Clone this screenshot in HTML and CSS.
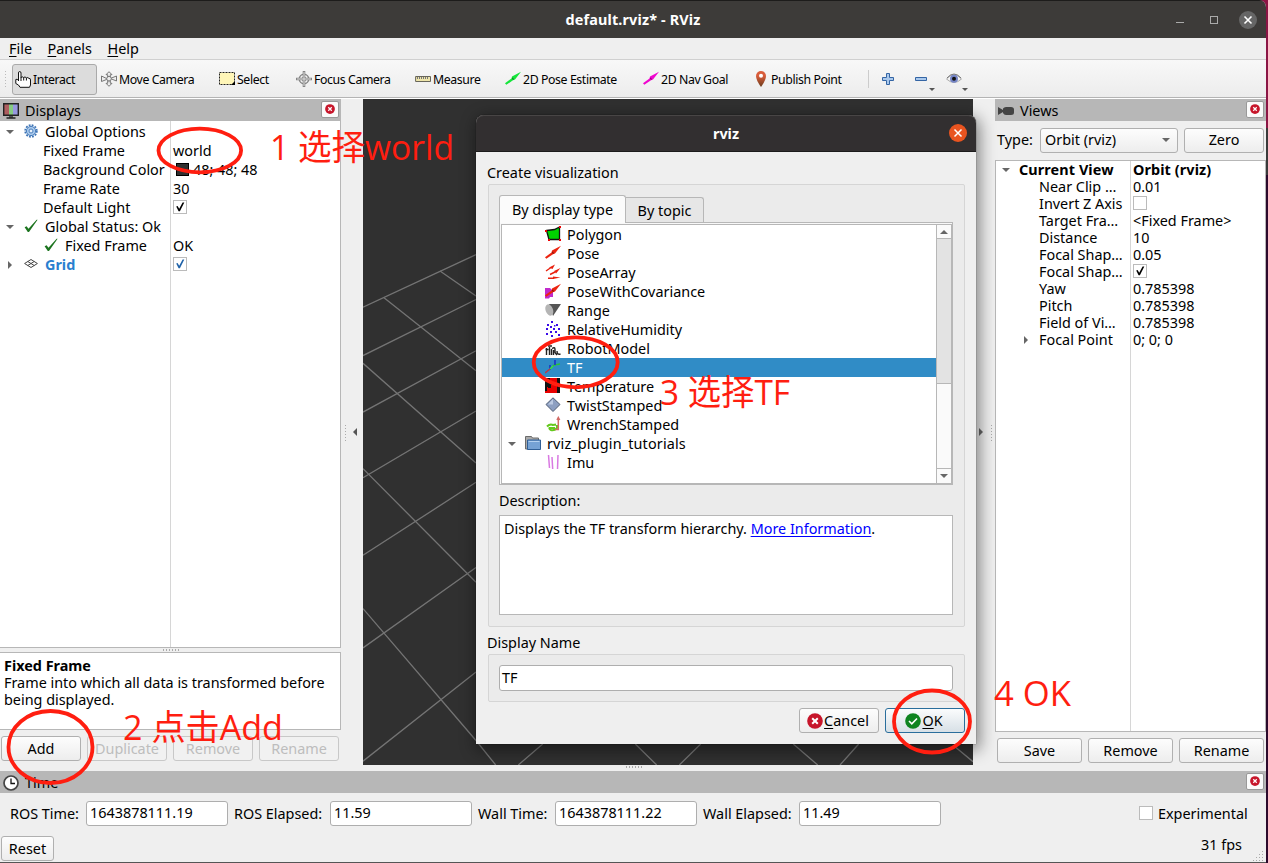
FILE: index.html
```html
<!DOCTYPE html>
<html lang="en">
<head>
    <meta charset="UTF-8">
    <meta name="viewport" content="width=device-width, initial-scale=1.0">
    <title>default.rviz* - RViz</title>
    <link rel="stylesheet" href="styles.css">
</head>
<body>
    <!-- shared icons -->
    <svg class="defs" width="0" height="0">
        <symbol id="close" viewBox="0 0 16 16">
            <circle cx="8" cy="8" r="7.8" fill="#c7162b"/>
            <path d="M5.2 5.2l5.6 5.6M10.8 5.2l-5.6 5.6" stroke="#fff" stroke-width="2"/>
        </symbol>
        <symbol id="check" viewBox="0 0 14 14">
            <path d="M3.2 6.5l1.4-.4 1.6 2.6L9.6 2.6h1.7L6.9 11.2H5.6z" fill="currentColor"/>
        </symbol>
        <symbol id="tick" viewBox="0 0 14 14">
            <path d="M.6 8.2l2-.9 1.9 2.4L12.6.8h1L5 13H3.8z" fill="#1c741f"/>
        </symbol>
        <symbol id="arrow" viewBox="0 0 16 16">
            <path d="M0 12.2L6.500 7.500 7 5.500 16 .8 10 8.500 8 9.300 1.300 13.800z" fill="currentColor"/>
            <path d="M7.300 6.800l1.200 1.800" stroke="#0006" stroke-width="1.200"/>
        </symbol>
    </svg>

    <div class="window">
        <div class="titlebar">
            <span class="title">default.rviz* - RViz</span>
            <div class="window-controls">
                <span class="minimize"></span>
                <span class="maximize"></span>
                <span class="close-btn"><svg width="18" height="18"><path d="M5.500 5.500l7 7M12.500 5.500l-7 7" stroke="#fff" stroke-width="1.600"/></svg></span>
            </div>
        </div>

        <div class="menubar">
            <span><u>F</u>ile</span>
            <span><u>P</u>anels</span>
            <span><u>H</u>elp</span>
        </div>

        <div class="toolbar">
            <span class="grip"></span>
            <div class="tools">
                <div class="tool active">
                    <svg width="17" height="17"><path d="M3.500 10V2q0-1.500 1.200-1.500T6 2v4.500Q7 5 8.500 6.500 10 5.300 11.500 6.800 13 6 14 7.500q1.500-.5 1.500 1.500v5l-1 2.300H5L3.500 14 .8 12.500V8.500q1.200-1 2.700 1z" fill="#fff" stroke="#111"/><path d="M6 6v4M8.700 6.500v3M11.400 7v2.500" stroke="#111"/></svg>
                    <span>Interact</span>
                </div>
                <div class="tool">
                    <svg width="16" height="16" fill="#eee" stroke="#777"><path d="M8 .7l3 3H9.300v2.500h-2.600V3.700H5zM8 15.300l3-3H9.300V9.800h-2.600v2.500H5z"/><path d="M.5 5l5 2.500 5-.5 5-2v5l-5-2-5 .5-5 2z"/><circle cx="8" cy="7.700" r="2.300"/></svg>
                    <span>Move Camera</span>
                </div>
                <div class="tool">
                    <svg width="16" height="16"><path d="M.5 1.500h15v12H.5z" fill="#fff6b8" stroke="#222" stroke-dasharray="2 1"/><path d="M16 10v4h-4z"/></svg>
                    <span>Select</span>
                </div>
                <div class="tool">
                    <svg width="16" height="16" fill="none" stroke="#858585"><circle cx="8" cy="8" r="4.700" stroke-width="1.500"/><circle cx="8" cy="8" r="2"/><path d="M8 0v16M0 8h16" stroke-width="2.600"/><path d="M8 1v14M1 8h14" stroke="#e5e5e5" stroke-width=".9"/></svg>
                    <span>Focus Camera</span>
                </div>
                <div class="tool">
                    <svg width="16" height="16"><path d="M.6 5.500h14.900v5H.6z" fill="#eee5aa" stroke="#68665a"/><path d="M2.500 6v2M4.500 6v2M6.500 6v2M8.500 6v2M10.500 6v2M12.500 6v2" stroke="#777"/></svg>
                    <span>Measure</span>
                </div>
                <div class="tool">
                    <svg class="green" width="16" height="16"><use href="#arrow"/></svg>
                    <span>2D Pose Estimate</span>
                </div>
                <div class="tool">
                    <svg class="magenta" width="16" height="16"><use href="#arrow"/></svg>
                    <span>2D Nav Goal</span>
                </div>
                <div class="tool">
                    <svg width="16" height="16"><linearGradient id="pin" x2="0" y2="1"><stop offset=".3" stop-color="#d95d3b"/><stop offset="1" stop-color="#693c1c"/></linearGradient><path d="M8 16Q3 9 3 5a5 5 0 0 1 10 0Q13 9 8 16z" fill="url(#pin)"/><circle cx="8" cy="4.800" r="2" fill="#fff"/></svg>
                    <span>Publish Point</span>
                </div>
            </div>
            <div class="view-tools">
                <svg width="12" height="12"><path d="M4.500.5h3v4h4v3h-4v4h-3v-4h-4v-3h4z" fill="#a9c8ec" stroke="#3465a4"/></svg>
                <svg width="12" height="12"><path d="M.5 4.500h11v3H.5z" fill="#a9c8ec" stroke="#3465a4"/></svg>
                <span class="caret"></span>
                <svg width="16" height="16"><path d="M.5 8Q8-1 15.500 8 8 15 .5 8z" fill="#f4f4f4" stroke="#aaa"/><path d="M1 7Q8-1 15 7" fill="none" stroke="#777"/><circle cx="8" cy="7.800" r="4" fill="#7585c7"/><circle cx="8" cy="7.800" r="2" fill="#111"/></svg>
                <span class="caret"></span>
            </div>
        </div>

        <div class="workspace">
            <div class="displays">
                <div class="dock-title">
                    <svg width="16" height="16"><linearGradient id="tv"><stop offset=".33" stop-color="#ae5e60"/><stop offset=".33" stop-color="#86cc83"/><stop offset=".67" stop-color="#86cc83"/><stop offset=".67" stop-color="#9798df"/></linearGradient><path d="M.7 .7h14.600v11.500H.7z" fill="url(#tv)" stroke="#222" stroke-width="1.400"/><path d="M6 13h4v2H6z" fill="#555"/><path d="M3.500 15h9" stroke="#222" stroke-width="1.500"/></svg>
                    <span>Displays</span>
                    <span class="dock-close"><svg width="10" height="10"><use href="#close"/></svg></span>
                </div>
                <div class="tree">
                    <div class="row"><div class="key"><i class="open"></i><svg width="14" height="14"><circle cx="7" cy="7" r="5.800" fill="none" stroke="#3d73b5" stroke-width="1.800" stroke-dasharray="1.800 1.240"/><circle cx="7" cy="7" r="4.600" fill="#a9c9ec" stroke="#4b80be"/><circle cx="7" cy="7" r="2" fill="#eaf2fb" stroke="#4b80be"/></svg><span>Global Options</span></div><div class="value"></div></div>
                    <div class="row child"><div class="key">Fixed Frame</div><div class="value">world</div></div>
                    <div class="row child"><div class="key">Background Color</div><div class="value"><b class="swatch"></b>48; 48; 48</div></div>
                    <div class="row child"><div class="key">Frame Rate</div><div class="value">30</div></div>
                    <div class="row child"><div class="key">Default Light</div><div class="value"><span class="box"><svg width="14" height="14"><use href="#check"/></svg></span></div></div>
                    <div class="row"><div class="key"><i class="open"></i><svg width="14" height="14"><use href="#tick"/></svg><span>Global Status: Ok</span></div><div class="value"></div></div>
                    <div class="row nested"><div class="key"><svg width="14" height="14"><use href="#tick"/></svg><span>Fixed Frame</span></div><div class="value">OK</div></div>
                    <div class="row grid-row"><div class="key"><i class="closed"></i><svg width="14" height="14" fill="none" stroke="#444"><path d="M.6 6.500L7 2.500l6.400 4L7 10.500zM3.800 4.500l6.400 4M10.200 4.500l-6.400 4"/></svg><span>Grid</span></div><div class="value"><span class="box"><svg width="14" height="14"><use href="#check"/></svg></span></div></div>
                </div>
                <div class="splitter-h"></div>
                <div class="help">
                    <b>Fixed Frame</b><br>
                    Frame into which all data is transformed before<br>being displayed.
                </div>
                <div class="buttons">
                    <button>Add</button>
                    <button disabled>Duplicate</button>
                    <button disabled>Remove</button>
                    <button disabled>Rename</button>
                </div>
            </div>

            <div class="splitter-v"><span class="dots"></span><i class="left"></i></div>

            <svg class="viewport" width="610" height="666">
                <g stroke="#747474" stroke-width="1.300" fill="none">
                    <path d="M0 208.200L113 155.600M0 256.600L113 200.500M0 313.100L113 251.700M0 378.700L113 312M0 456.300L113 383.300M0 548.900L113 468.500M0 662.200L113 573.100"/>
                    <path d="M77 172l36 25M21 198.700l92 73M0 264.300L113 364M0 369.600L113 483.300M0 509.600L113 641.500l19.700 24.500"/>
                    <path d="M179.700 645l-24.400 21M272.300 645l21.400 21M337.700 645l-21.400 21M430.300 645l24.400 21M495.700 645L477 666M592 647.700l18 15"/>
                </g>
            </svg>

            <div class="splitter-v after"><i class="right"></i><span class="dots"></span></div>

            <div class="views">
                <div class="dock-title">
                    <svg width="16" height="16" fill="#444"><path d="M0 4l5 3V5.500Q6 4 8 4h5q3 0 3 2.500v3Q16 12 13 12H8q-2 0-3-2V9l-5 3z"/></svg>
                    <span>Views</span>
                    <span class="dock-close"><svg width="10" height="10"><use href="#close"/></svg></span>
                </div>
                <div class="type-row">
                    <span>Type:</span>
                    <div class="combo">Orbit (rviz)<i class="open"></i></div>
                    <button>Zero</button>
                </div>
                <div class="tree">
                    <div class="row head"><div class="key"><i class="open"></i><b>Current View</b></div><div class="value"><b>Orbit (rviz)</b></div></div>
                    <div class="row"><div class="key">Near Clip …</div><div class="value">0.01</div></div>
                    <div class="row"><div class="key">Invert Z Axis</div><div class="value"><span class="box"></span></div></div>
                    <div class="row"><div class="key">Target Fra…</div><div class="value">&lt;Fixed Frame&gt;</div></div>
                    <div class="row"><div class="key">Distance</div><div class="value">10</div></div>
                    <div class="row"><div class="key">Focal Shap…</div><div class="value">0.05</div></div>
                    <div class="row"><div class="key">Focal Shap…</div><div class="value"><span class="box"><svg width="14" height="14"><use href="#check"/></svg></span></div></div>
                    <div class="row"><div class="key">Yaw</div><div class="value">0.785398</div></div>
                    <div class="row"><div class="key">Pitch</div><div class="value">0.785398</div></div>
                    <div class="row"><div class="key">Field of Vi…</div><div class="value">0.785398</div></div>
                    <div class="row point"><div class="key"><i class="closed"></i><span>Focal Point</span></div><div class="value">0; 0; 0</div></div>
                </div>
                <div class="buttons">
                    <button>Save</button>
                    <button>Remove</button>
                    <button>Rename</button>
                </div>
            </div>
        </div>

        <div class="time-gap"><span class="dots"></span></div>
        <div class="dock-title time-title">
            <svg width="16" height="16"><circle cx="8" cy="8" r="7" fill="#fff" stroke="#444" stroke-width="1.700"/><path d="M8 3.500V8.500h4" fill="none" stroke="#111" stroke-width="1.300"/></svg>
            <span>Time</span>
            <span class="dock-close"><svg width="10" height="10"><use href="#close"/></svg></span>
        </div>
        <div class="time-row">
            <label>ROS Time:</label><div class="field">1643878111.19</div>
            <label>ROS Elapsed:</label><div class="field">11.59</div>
            <label>Wall Time:</label><div class="field">1643878111.22</div>
            <label>Wall Elapsed:</label><div class="field">11.49</div>
            <div class="experimental"><span class="box"></span><span>Experimental</span></div>
        </div>
        <div class="status">
            <button>Reset</button>
            <span class="fps">31 fps</span>
            <svg class="resize" width="12" height="12"><path d="M10 1.500h2M7 4.500h5M4 7.500h8M1 10.500h11" stroke="#aaa" stroke-dasharray="1 2"/></svg>
        </div>
    </div>

    <div class="dialog">
        <div class="dialog-title">
            <span>rviz</span>
            <span class="dialog-close"><svg width="18" height="18"><path d="M5.500 5.500l7 7M12.500 5.500l-7 7" stroke="#fff" stroke-width="1.500"/></svg></span>
        </div>
        <div class="dialog-body">
            <div class="group-label">Create visualization</div>
            <div class="group create">
                <div class="tabs"><span class="tab selected">By display type</span><span class="tab">By topic</span></div>
                <div class="pane">
                    <div class="list">
                        <div class="items">
                            <div class="item"><svg width="16" height="16"><path d="M1.500 4.500l8-1L14.500 1v12.500h-10.500z" fill="#00d400" stroke="#111" stroke-width="1.300"/><path d="M0 4h2v2H0zM14 0h2v2h-2zM3 13h2v2H3zM14 13h2v2h-2z" fill="#e00"/></svg><span>Polygon</span></div>
                            <div class="item"><svg class="red" width="16" height="16"><use href="#arrow"/></svg><span>Pose</span></div>
                            <div class="item"><svg width="16" height="16" fill="#e9210f" stroke="#e9210f"><path d="M1 7l5-3.500M5 10.500l5-2.500M3 14.200h6" stroke-width="1.400"/><path d="M4 3.500l6-3L7.500 5zM9 7L15.500 4 11 9.500zM8 12.500l7.500 1-7.500 1.500z" stroke="none"/></svg><span>PoseArray</span></div>
                            <div class="item"><svg class="red" width="16" height="16"><path d="M0 5h5l3 3v6H5l-1 1.500H0z" fill="#c12bcc"/><use href="#arrow"/></svg><span>PoseWithCovariance</span></div>
                            <div class="item"><svg width="16" height="16"><path d="M4 2h12L8 14z" fill="#555"/><ellipse cx="4.300" cy="8" rx="3.700" ry="5.900" transform="rotate(-20 4.300 8)" fill="#b5b5b5"/></svg><span>Range</span></div>
                            <div class="item"><svg width="16" height="16" fill="#3a0be8"><path d="M6 0h2v2H6zM2 3h2v2H2zM5 5h2v2H5zM11 3h2v2h-2zM1 7h2v2H1zM8 7h2v2H8zM13 7h2v2h-2zM5 10h2v2H5zM10 10h2v2h-2zM1 12h2v2H1zM6 14h2v2H6zM13 13h2v2h-2zM9 4h1.500v1.500H9z"/></svg><span>RelativeHumidity</span></div>
                            <div class="item"><svg width="16" height="16" fill="none" stroke="#222"><path d="M1.500 8v7M.5 9.500h3M4.500 7v8M3 6h4M6.500 9v6M7 8.500q3-2 3 1v3l2 2.500M8.500 10v5M12 11q0 4 3.500 3" stroke-width="1.400"/></svg><span>RobotModel</span></div>
                            <div class="item current"><svg width="16" height="16" fill="none"><path d="M6 9L9 6l6-1" stroke="#28c434" stroke-width="1.300"/><path d="M5 11V6M10 6V1" stroke="#1d30c9" stroke-width="1.600"/><path d="M0 14l5-4" stroke="#b53b48" stroke-width="1.600"/><path d="M5 10l3-3" stroke="#3bda45" stroke-width="1.600"/></svg><span>TF</span></div>
                            <div class="item"><svg width="16" height="16"><path d="M0 0h15v15H0z" fill="#e80000"/><path d="M0 0h5v3h3v2h4V0h3v15h-3v-4H8v-1H5v2H3V9H2v4H0z" fill="#111"/><path d="M3 10h9v4H3zM6 7h6v4H6z" fill="#e80000"/></svg><span>Temperature</span></div>
                            <div class="item"><svg width="16" height="16"><path d="M8 .8L15 7.500 8 14.500 1 7.500z" fill="#8d9fc1" stroke="#4e5c73"/><path d="M8 2L3 7.500h5z" fill="#bccae2"/></svg><span>TwistStamped</span></div>
                            <div class="item"><svg width="16" height="16" fill="none"><path d="M2 10.500q3-3 6-1.500l3-.5M12 9v3q-3 3-6 2-2-1-1.500-2H10" stroke="#64c91d" stroke-width="2"/><path d="M10 13.500h3.300V2M12 4l1.300-2.500L14.700 4" stroke="#d36b66" stroke-width="1.500"/></svg><span>WrenchStamped</span></div>
                            <div class="item folder"><i class="open"></i><svg width="17" height="16"><path d="M.5 14V1.500h6l1 1.500h6v11z" fill="#aaa" stroke="#6b6b6b"/><path d="M2.500 5h13v9.500h-13z" fill="#75a2d5" stroke="#305f96"/><path d="M3.500 6.500h11" stroke="#b2d0f0"/></svg><span>rviz_plugin_tutorials</span></div>
                            <div class="item"><svg width="16" height="16" fill="none" stroke="#d979e2"><path d="M3.500 1l1 13M7 3l.7 12M13 1l-.5 14" stroke-width="1.500"/></svg><span>Imu</span></div>
                        </div>
                        <div class="scrollbar"><span class="sb-btn"><i class="up"></i></span><span class="thumb-space"></span><span class="thumb"></span><span class="sb-btn bottom"><i class="open"></i></span></div>
                    </div>
                </div>
                <div class="desc-label">Description:</div>
                <div class="desc">Displays the TF transform hierarchy. <a href="#">More Information</a>.</div>
            </div>
            <div class="group-label name-label">Display Name</div>
            <div class="group"><div class="field">TF</div></div>
            <div class="dialog-buttons">
                <button><svg width="16" height="16"><use href="#close"/></svg><span><u>C</u>ancel</span></button>
                <button class="default"><svg width="16" height="16"><circle cx="8" cy="8" r="7.800" fill="#0e8420"/><path d="M4 8l2.800 2.800L12 5.500" fill="none" stroke="#fff" stroke-width="1.600"/></svg><span><u>O</u>K</span></button>
            </div>
        </div>
    </div>

    <!-- step marks over the windows -->
    <svg class="marks" width="1268" height="863">
        <g fill="none" stroke="#ff1e10" stroke-width="3.800">
            <ellipse cx="199.800" cy="150.500" rx="41.300" ry="21.800"/>
            <ellipse cx="50.500" cy="747" rx="42" ry="36"/>
            <ellipse cx="575.700" cy="362.300" rx="42" ry="25"/>
            <ellipse cx="932" cy="721.500" rx="38" ry="31"/>
        </g>
        <g class="mark-text">
            <text x="270" y="160" textLength="184" lengthAdjust="spacingAndGlyphs">1 选择world</text>
            <text x="123" y="740" textLength="160" lengthAdjust="spacingAndGlyphs">2 点击Add</text>
            <text x="660" y="405" textLength="130" lengthAdjust="spacingAndGlyphs">3 选择TF</text>
            <text x="994" y="706" textLength="77" lengthAdjust="spacingAndGlyphs">4 OK</text>
        </g>
    </svg>
</body>
</html>
```
FILE: styles.css
```css
* {
    box-sizing: border-box;
    margin: 0;
    padding: 0;
}

body {
    width: 1268px;
    height: 863px;
    overflow: hidden;
    background: linear-gradient(#8b1545 128px, #3a3a3a 128px, #3a3a3a 175px, #2c0a2c 175px);
    font-family: "Noto Sans", "Open Sans", sans-serif;
    font-size: 14.4px;
    color: #000;
    position: relative;
}

svg {
    flex: none;
    display: block;
}

.defs {
    position: absolute;
}

u {
    text-underline-offset: 2px;
}

.window {
    width: 1266px;
    height: 863px;
    background: #efefef;
    display: flex;
    flex-direction: column;
    border-bottom: 1px solid #555;
    border-radius: 0 7px 0 0;
    overflow: hidden;
}

.titlebar {
    height: 38px;
    flex: none;
    background: #3d3b39;
    border-top: 1px solid #1d1c1b;
    color: #fff;
    font-weight: bold;
    display: grid;
    grid-template-columns: 1fr auto 1fr;
    align-items: center;
}

.title {
    grid-column: 2;
    letter-spacing: 0.15px;
}

.window-controls {
    display: flex;
    justify-content: flex-end;
    align-items: center;
    padding-right: 9px;
}

.minimize {
    width: 8px;
    height: 1px;
    background: #aaa;
    margin: 5px 26px 0 0;
}

.maximize {
    width: 8px;
    height: 8px;
    border: 1px solid #aaa;
    margin-right: 21px;
}

.close-btn,
.dialog-close {
    width: 18px;
    height: 18px;
    border-radius: 50%;
    background: #666;
}

.menubar {
    height: 22px;
    flex: none;
    border-bottom: 1px solid #d0d0d0;
    display: flex;
    gap: 15.500px;
    padding-left: 9px;
    line-height: 22px;
}

.toolbar {
    height: 39px;
    flex: none;
    border-bottom: 1px solid #fff;
    box-shadow: inset 0 -1px #b4b4b4;
    background: linear-gradient(#f8f8f8, #ececec);
    display: flex;
    align-items: center;
    font-size: 12.300px;
    letter-spacing: -0.4px;
    padding-left: 4px;
}

.grip {
    width: 4px;
    height: 18px;
    margin-right: 4px;
    background: radial-gradient(circle, #bbb 0.7px, transparent 1px) 0 0 / 3px 3px;
}

.tools {
    display: grid;
    grid-template-columns: 86px 118px 77px 119px 90px 138px 110px 118px;
}

.tool {
    height: 31px;
    display: flex;
    align-items: center;
    gap: 2px;
    padding-left: 3px;
    white-space: nowrap;
}

.tool.active {
    width: 85px;
    background: #dcdcdc;
    border: 1px solid #aaa;
    border-radius: 3px;
    padding-left: 2px;
    gap: 1px;
}

.green { color: #15e53a; }
.magenta { color: #f006cf; }
.red { color: #ec2410; }

.view-tools {
    display: flex;
    align-items: center;
    border-left: 1px solid #ccc;
    height: 18px;
    padding-left: 13px;
}

.view-tools svg + svg {
    margin-left: 21px;
}

.caret,
.open,
.closed,
.left,
.right,
.up {
    flex: none;
    width: 0;
    height: 0;
    border: 4px solid transparent;
}

.caret {
    border-width: 3px 3px 0;
    border-top-color: #555;
    margin: 20px 11px 0 2px;
}

.caret:last-child {
    margin-left: 0;
}

.open {
    border-width: 4px 4px 0;
    border-top-color: #666;
}

.up {
    border-width: 0 4px 4px;
    border-bottom-color: #666;
}

.closed,
.right {
    border-width: 4px 0 4px 4px;
    border-left-color: #666;
}

.left {
    border-width: 4px 4px 4px 0;
    border-right-color: #555;
}

.workspace {
    height: 666px;
    flex: none;
    display: flex;
}

.displays {
    width: 341px;
    display: flex;
    flex-direction: column;
}

.dock-title {
    height: 22px;
    flex: none;
    background: #b7b7b7;
    display: flex;
    align-items: center;
    gap: 6px;
    padding: 1px 2px 0 3px;
}

.dock-close {
    width: 18px;
    height: 17px;
    margin: -3px 0 0 auto;
    background: #fbfbfb;
    border: 1px solid #999;
    border-radius: 2px;
    display: flex;
    align-items: center;
    justify-content: center;
}

.tree {
    background: #fff;
    border: 1px solid #b7b7b7;
}

.displays .tree {
    height: 527px;
    border-left: 0;
    border-top: 0;
    background: linear-gradient(90deg, #fff 170px, #d6d6d6 170px, #d6d6d6 171px, #fff 171px);
    padding-top: 1px;
}

.row {
    display: flex;
    height: 19px;
    line-height: 19px;
    white-space: nowrap;
}

.key {
    width: 170px;
    flex: none;
    display: flex;
    align-items: center;
    padding-left: 6px;
}

.value {
    display: flex;
    align-items: center;
    padding-left: 3px;
}

.displays .key svg {
    margin: -2px 7px 0 10px;
}

.displays .closed {
    margin: 0 2px;
}

.displays .child .key {
    padding-left: 43px;
}

.displays .nested .key {
    padding-left: 34px;
}

.grid-row .key {
    color: #2a7fcf;
    font-weight: bold;
}

.grid-row .box {
    color: #1f62a8;
}

.box {
    width: 14px;
    height: 14px;
    flex: none;
    border: 1px solid #bbb;
    background: #fff;
}

.row .box {
    margin-top: -1px;
}

.box svg {
    margin: -1px;
}

.swatch {
    width: 13px;
    height: 13px;
    margin: -1px 4px 0 3px;
    background: #303030;
    border: 1px solid #000;
}

.splitter-h {
    height: 4px;
    background: radial-gradient(circle, #aaa 0.7px, transparent 1px) 0 0 / 3px 4px repeat-x;
    width: 17px;
    margin-left: 162px;
}

.help {
    height: 78px;
    background: #fff;
    border: 1px solid #b7b7b7;
    border-left: 0;
    padding: 4px;
    line-height: 17px;
    white-space: nowrap;
}

.buttons {
    display: flex;
    gap: 6px;
    padding: 6px 2px 0 1px;
}

button {
    height: 25px;
    flex: 1 1 0;
    min-width: 0;
    border: 1px solid #b0b0b0;
    border-radius: 3px;
    background: linear-gradient(#fdfdfd, #ededed);
    font: inherit;
    color: #000;
    display: flex;
    align-items: center;
    justify-content: center;
}

button:disabled {
    color: #bdbdbd;
    border-color: #c8c8c8;
    background: #f1f1f1;
}

.splitter-v {
    width: 22px;
    display: flex;
    align-items: center;
    justify-content: space-between;
    padding: 0 6px 0 3px;
}

.splitter-v.after {
    padding: 0 2px 0 6px;
}

.splitter-v .dots {
    width: 3px;
    height: 17px;
    background: radial-gradient(circle, #aaa 0.7px, transparent 1px) 0 0 / 3px 3px;
}

.viewport {
    background: #303030;
}

.views {
    width: 271px;
    display: flex;
    flex-direction: column;
}

.views .type-row {
    height: 39px;
    flex: none;
    display: flex;
    align-items: center;
    padding: 0 2px;
}

.type-row > span {
    width: 43px;
    margin-top: -2px;
}

.type-row button {
    padding-bottom: 1px;
    margin-top: -1px;
}

.combo {
    width: 138px;
    height: 25px;
    margin: -1px 6px 0 0;
    border: 1px solid #b0b0b0;
    border-radius: 3px;
    background: linear-gradient(#fdfdfd, #ededed);
    display: flex;
    align-items: center;
    justify-content: space-between;
    padding: 0 7px 1px 4px;
}

.views .tree {
    height: 572px;
    background: linear-gradient(90deg, #fff 134px, #d6d6d6 134px, #d6d6d6 135px, #fff 135px);
}

.views .row {
    height: 17px;
    line-height: 17px;
}

.views .key {
    width: 134px;
    padding-left: 43px;
}

.views .head .key {
    padding-left: 6px;
}

.head b {
    letter-spacing: 0.1px;
}

.head .open {
    margin-right: 9px;
}

.views .point .key {
    padding-left: 28px;
}

.point .closed {
    margin-right: 11px;
}

.views .buttons {
    padding: 6px 2px 0;
}

.time-gap {
    height: 6px;
    flex: none;
    display: flex;
    justify-content: center;
}

.time-gap .dots {
    width: 17px;
    background: radial-gradient(circle, #aaa 0.7px, transparent 1px) 0 0 / 3px 4px repeat-x;
}

.time-row {
    height: 41px;
    flex: none;
    display: flex;
    align-items: center;
    padding: 0 0 1px 10px;
}

.time-row label {
    white-space: nowrap;
    width: 76px;
}

.time-row label:nth-of-type(2) { width: 96px; }
.time-row label:nth-of-type(3) { width: 77px; }
.time-row label:nth-of-type(4) { width: 96px; }

.field {
    height: 25px;
    background: #fff;
    border: 1px solid #aeaeae;
    border-radius: 3px;
    padding-left: 3px;
    line-height: 23px;
}

.time-row .field {
    width: 142px;
    margin-right: 6px;
    line-height: 22px;
}

.experimental {
    display: flex;
    align-items: center;
    gap: 5px;
    margin-left: 192px;
}

.status {
    display: flex;
    flex: 1;
    padding: 2px 2px 0 1px;
}

.status button {
    flex: none;
    width: 53px;
}

.fps {
    margin: -1px 0 0 auto;
}

.resize {
    margin: 14px 0 0 10px;
}

/* add display dialog */
.dialog {
    position: absolute;
    left: 476px;
    top: 115px;
    width: 500px;
    height: 629px;
    background: #efefef;
    border-radius: 8px 8px 0 0;
    box-shadow: 0 0 1px #000, 2px 4px 16px 2px rgba(0, 0, 0, 0.45);
}

.dialog-title {
    height: 37px;
    background: #322f30;
    border-bottom: 1px solid #1c1b1b;
    border-radius: 8px 8px 0 0;
    box-shadow: inset 0 1px #484545;
    color: #fff;
    font-weight: bold;
    display: grid;
    grid-template-columns: 1fr auto 1fr;
    align-items: center;
    padding-right: 9px;
}

.dialog-title > span:first-child {
    grid-column: 2;
    padding-left: 9px;
}

.dialog-close {
    justify-self: end;
    background: #e95420;
}

.dialog-body {
    padding: 10px 11px 0 12px;
}

.group-label {
    height: 22px;
    line-height: 22px;
    margin-left: -1px;
}

.group {
    border: 1px solid #d5d5d5;
    border-radius: 2px;
    background: #ebebeb;
    padding: 10px 11px 10px 10px;
}

.create {
    height: 443px;
}

.tabs {
    display: flex;
    align-items: flex-end;
    height: 27px;
}

.tab {
    height: 25px;
    width: 78px;
    line-height: 26px;
    text-align: center;
    white-space: nowrap;
    border: 1px solid #b7b7b7;
    border-left: 0;
    border-bottom: 0;
    border-radius: 0 3px 0 0;
    background: #e6e6e6;
}

.tab.selected {
    height: 28px;
    width: 127px;
    line-height: 28px;
    margin-bottom: -1px;
    background: #fbfbfb;
    border-left: 1px solid #b7b7b7;
    border-radius: 3px 3px 0 0;
    position: relative;
}

.pane {
    height: 263px;
    border: 1px solid #b7b7b7;
    background: #f8f8f8;
    padding: 1px 0 1px 1px;
}

.list {
    height: 260px;
    border: 1px solid #b7b7b7;
    background: #fff;
    display: flex;
}

.items {
    flex: 1;
}

.item {
    height: 19px;
    line-height: 19px;
    display: flex;
    align-items: center;
    gap: 6px;
    padding-left: 43px;
    white-space: nowrap;
}

.item > svg {
    margin-top: -1px;
}

.item.current {
    background: #308cc6;
    color: #fff;
}

.item.folder {
    padding-left: 6px;
    letter-spacing: 0.15px;
}

.folder svg {
    margin-left: 3px;
    margin-right: -1px;
}

.scrollbar {
    width: 15px;
    border-left: 1px solid #b7b7b7;
    background: #e3e3e3;
    display: flex;
    flex-direction: column;
}

.sb-btn {
    height: 14px;
    background: #fafafa;
    border-bottom: 1px solid #b7b7b7;
    display: flex;
    align-items: center;
    justify-content: center;
}

.sb-btn.bottom {
    border-bottom: 0;
}

.thumb-space {
    height: 144px;
}

.thumb {
    flex: 1;
    background: #fafafa;
    border: solid #b7b7b7;
    border-width: 1px 0;
}

.desc-label {
    height: 30px;
    line-height: 32px;
}

.desc {
    height: 100px;
    background: #fff;
    border: 1px solid #b7b7b7;
    padding: 4px;
    line-height: 17px;
}

.desc a {
    color: #00f;
    text-underline-offset: 2px;
}

.name-label {
    margin-top: 5px;
}

.group .field {
    height: 26px;
    line-height: 24px;
    padding-left: 2px;
}

.dialog-buttons {
    display: flex;
    justify-content: flex-end;
    gap: 6px;
    margin-top: 6px;
}

.dialog-buttons button {
    flex: none;
    width: 80px;
    gap: 1px;
    padding-right: 2px;
}

.dialog-buttons .default {
    border-color: #2a6e9c;
    background: linear-gradient(#fbfcfd, #d7e0e6);
}

.marks {
    position: absolute;
    left: 0;
    top: 0;
}

.mark-text {
    font-family: "Open Sans", "Noto Sans CJK SC", sans-serif;
    font-size: 35px;
    fill: #ff1e10;
}
```
